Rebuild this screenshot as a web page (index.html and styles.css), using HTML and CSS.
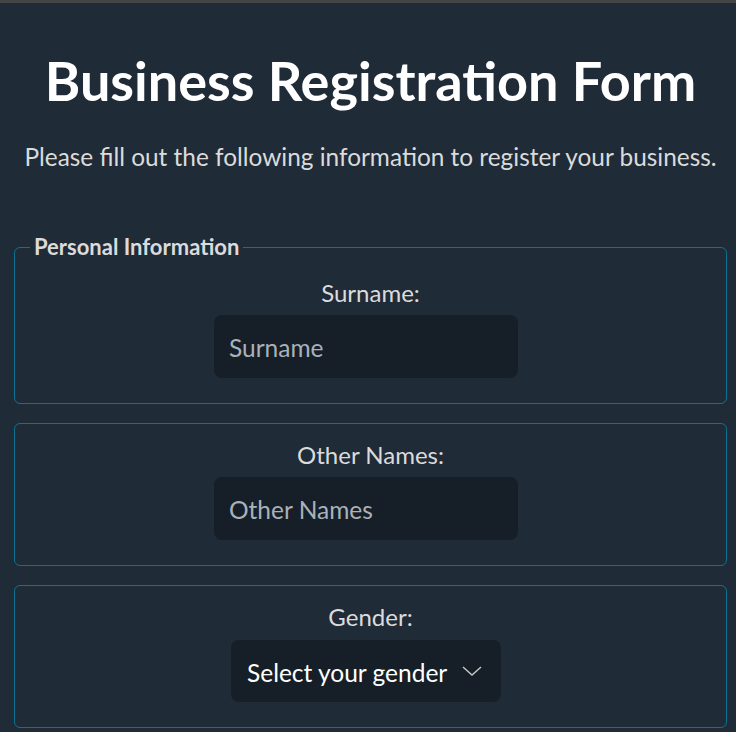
FILE: index.html
```html
<!DOCTYPE html>
<html lang="en">
<head>
<meta charset="utf-8">
<title>Business Registration Form</title>
<link rel="stylesheet" href="styles.css">
</head>
<body>
<div class="topbar"></div>
<main class="page">
  <h1 class="title">Business Registration Form</h1>
  <p class="intro">Please fill out the following information to register your business.</p>
  <form class="form">
    <fieldset class="group">
      <legend class="legend">Personal Information</legend>
      <label class="label" for="surname">Surname:</label>
      <input class="field" id="surname" type="text" placeholder="Surname">
    </fieldset>
    <fieldset class="group">
      <label class="label" for="other">Other Names:</label>
      <input class="field" id="other" type="text" placeholder="Other Names">
    </fieldset>
    <fieldset class="group">
      <label class="label" for="gender">Gender:</label>
      <div class="select-wrap">
        <select class="select" id="gender">
          <option>Select your gender</option>
          <option>Male</option>
          <option>Female</option>
        </select>
        <svg class="chevron" width="20" height="10" viewBox="0 0 20 10" aria-hidden="true">
          <polyline points="1,1 10,9 19,1" fill="none" stroke="#c8c8c8" stroke-width="1.4"/>
        </svg>
      </div>
    </fieldset>
  </form>
</main>
</body>
</html>
```
FILE: styles.css
```css
html, body {
  margin: 0;
  padding: 0;
  background: #202b38;
}
body {
  font-family: Lato, "Open Sans", sans-serif;
  color: #dbdbdb;
}
.topbar {
  height: 3px;
  background: #454545;
}
.page {
  padding: 0 9px 40px 14px;
}
.title {
  margin: 47px 0 0;
  font-size: 54px;
  line-height: 61px;
  font-weight: 700;
  color: #ffffff;
  text-align: center;
}
.intro {
  margin: 29px 0 0;
  font-size: 24.4px;
  line-height: 33px;
  text-align: center;
  color: #dbdbdb;
}
.form {
  margin-top: 59px;
  display: flex;
  flex-direction: column;
  gap: 19px;
}
.group {
  margin: 0;
  min-width: 0;
  border: 1px solid #0b7392;
  border-radius: 6px;
  padding: 16px 15px 25px;
  display: flex;
  flex-direction: column;
  align-items: center;
}
.legend {
  padding: 0 4px;
  font-size: 22px;
  line-height: 30px;
  font-weight: 700;
  color: #dbdbdb;
}
.label {
  font-size: 24px;
  line-height: 30px;
  margin-bottom: 7px;
  color: #dbdbdb;
}
.field {
  box-sizing: border-box;
  width: 304px;
  height: 63px;
  margin-right: 9px;
  border: none;
  border-radius: 8px;
  background: #161f27;
  padding: 2px 15px 0;
  font-family: inherit;
  font-size: 24.5px;
  color: #ffffff;
  outline: none;
}
.field::placeholder {
  color: #a9b1ba;
}
.select-wrap {
  position: relative;
  margin-right: 9px;
  margin-top: 1px;
}
.select {
  box-sizing: border-box;
  width: 270px;
  height: 62px;
  border: none;
  border-radius: 8px;
  background: #161f27;
  padding: 2px 16px 0;
  font-family: inherit;
  font-size: 24.5px;
  color: #ffffff;
  appearance: none;
  -webkit-appearance: none;
  outline: none;
}
.chevron {
  position: absolute;
  right: 19px;
  top: 26px;
  pointer-events: none;
}
```
